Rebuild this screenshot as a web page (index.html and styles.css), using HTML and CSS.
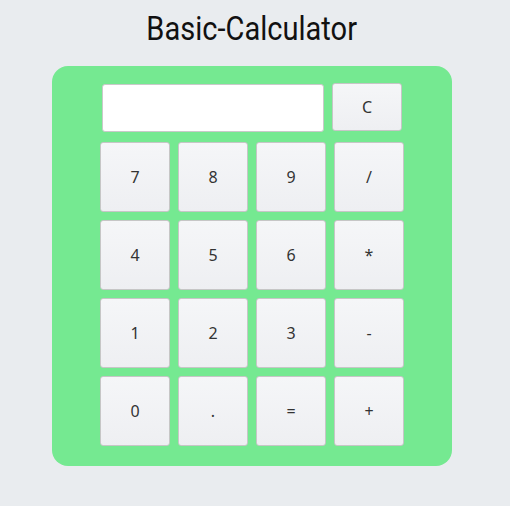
FILE: index.html
```html
<!DOCTYPE html>
<html>
<head>
<meta charset="utf-8">
<link rel="stylesheet" href="styles.css">
</head>
<body>
<h1 class="title"><span class="title-text">Basic-Calculator</span></h1>
<div class="panel">
  <div class="top">
    <input class="display" type="text">
    <button class="key clear">C</button>
  </div>
  <div class="keys">
    <button class="key">7</button>
    <button class="key">8</button>
    <button class="key">9</button>
    <button class="key">/</button>
    <button class="key">4</button>
    <button class="key">5</button>
    <button class="key">6</button>
    <button class="key">*</button>
    <button class="key">1</button>
    <button class="key">2</button>
    <button class="key">3</button>
    <button class="key">-</button>
    <button class="key">0</button>
    <button class="key">.</button>
    <button class="key">=</button>
    <button class="key">+</button>
  </div>
</div>
</body>
</html>
```
FILE: styles.css
```css
html, body {
  margin: 0;
  padding: 0;
  background: #e9ecef;
}
body {
  padding-right: 6px;
}
.title {
  margin: 9px 0 17px;
  font-family: Roboto, "DejaVu Sans", sans-serif;
  font-weight: 400;
  font-size: 33px;
  line-height: 40px;
  text-align: center;
  color: #111;
}
.title-text {
  display: inline-block;
  transform: scaleX(0.88);
}
.panel {
  box-sizing: border-box;
  width: 400px;
  height: 400px;
  margin: 0 auto;
  padding: 18px 48px 20px;
  background: #75e991;
  border-radius: 16px;
}
.top {
  display: flex;
  align-items: flex-start;
}
.display {
  box-sizing: border-box;
  width: 222px;
  height: 48px;
  margin: 0 0 0 2px;
  border: 1px solid #c9c9c9;
  border-radius: 3px;
  background: #fff;
  padding: 0 8px;
  font-size: 18px;
}
.key {
  box-sizing: border-box;
  width: 70px;
  height: 70px;
  margin: 0;
  padding: 0;
  border: 1px solid #c6c6c6;
  border-radius: 3px;
  background: linear-gradient(#f5f6f8, #eeeff2);
  font-family: "Noto Sans", "Open Sans", sans-serif;
  font-size: 16px;
  color: #333;
}
.clear {
  height: 48px;
  margin-left: 8px;
  margin-top: -1px;
}
.keys {
  margin-top: 10px;
  display: grid;
  grid-template-columns: repeat(4, 70px);
  grid-auto-rows: 70px;
  gap: 8px;
}
```
